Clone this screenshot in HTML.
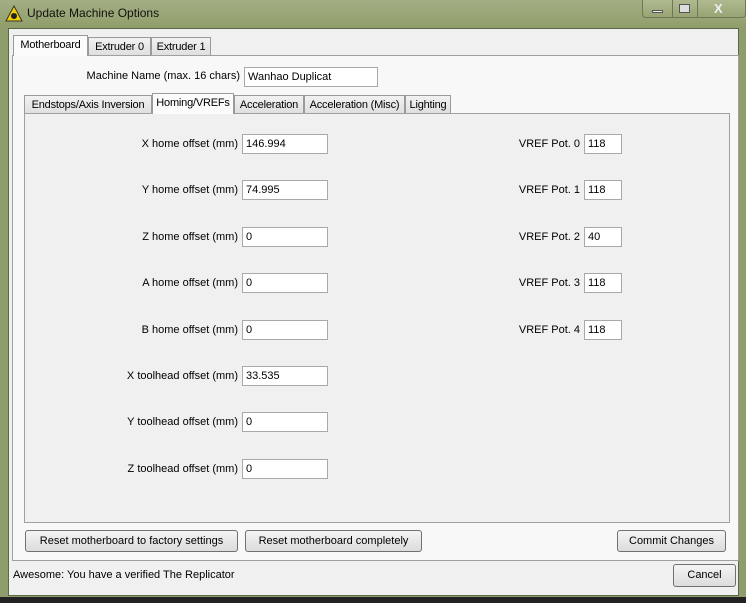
<!DOCTYPE html>
<html><head><style>
*{box-sizing:border-box;margin:0;padding:0}
body{width:746px;height:603px;overflow:hidden;background:#8f9d6c;font-family:"Liberation Sans",sans-serif;font-size:11px;color:#000;position:relative}
.a{position:absolute}
.title{left:0;top:0;width:746px;height:28px;background:linear-gradient(#a3ae84,#909e6a)}
.win{left:8px;top:28px;width:731px;height:568px;background:#f0f0f0;border:1px solid #5c6648}
.tab{position:absolute;height:19px;border:1px solid #9a9a9a;border-bottom:none;background:linear-gradient(#f2f2f2,#dedede);padding:3px 0 0;text-align:center;white-space:nowrap;letter-spacing:-0.2px}
.tab.sel{background:#fbfbfb;height:21px;z-index:2}
.panel{position:absolute;border:1px solid #a0a0a0;background:#f8f8f8}
.inp{position:absolute;height:20px;background:#fff;border:1px solid #a9a9a9;padding:3px 3px 0;white-space:nowrap}
.lbl{position:absolute;text-align:right;white-space:nowrap}
.btn{position:absolute;height:22px;border:1px solid #707070;border-radius:3px;background:linear-gradient(#f4f4f4,#dcdcdc);text-align:center;padding-top:4px;white-space:nowrap}
</style></head><body>
<div class="a title"></div>
<svg class="a" style="left:5px;top:5px" width="18" height="17"><polygon points="9,1 17,16 1,16" fill="#f0d000" stroke="#333" stroke-width="1"/><circle cx="9" cy="11" r="3" fill="#222"/></svg>
<div class="a" style="left:27px;top:6px;font-size:12px;color:#111">Update Machine Options</div>
<div class="a" style="left:642px;top:0;width:104px;height:18px;border:1px solid #6d7856;border-top:none;border-radius:0 0 4px 4px;background:linear-gradient(#b0ba90,#98a474)"></div>
<div class="a" style="left:672px;top:0;width:1px;height:18px;background:#6d7856"></div>
<div class="a" style="left:697px;top:0;width:1px;height:18px;background:#6d7856"></div>
<div class="a" style="left:652px;top:10px;width:11px;height:3px;background:#eee;border:1px solid #555"></div>
<div class="a" style="left:679px;top:4px;width:11px;height:9px;background:#ddd;border:1px solid #555"></div>
<div class="a" style="left:714px;top:1px;font-size:13px;font-weight:bold;color:#eee">X</div>
<div class="a win"></div>
<div class="tab sel" style="left:13px;top:35px;width:75px">Motherboard</div>
<div class="tab" style="left:88px;top:37px;width:63px">Extruder 0</div>
<div class="tab" style="left:151px;top:37px;width:60px">Extruder 1</div>
<div class="panel" style="left:12px;top:55px;width:727px;height:506px"></div>
<div class="lbl" style="left:60px;top:70px;width:180px">Machine Name (max. 16 chars)</div>
<div class="inp" style="left:244px;top:67px;width:134px">Wanhao Duplicat</div>
<div class="tab" style="left:24px;top:95px;width:128px">Endstops/Axis Inversion</div>
<div class="tab sel" style="left:152px;top:93px;width:82px">Homing/VREFs</div>
<div class="tab" style="left:234px;top:95px;width:70px">Acceleration</div>
<div class="tab" style="left:304px;top:95px;width:101px">Acceleration (Misc)</div>
<div class="tab" style="left:405px;top:95px;width:46px">Lighting</div>
<div class="panel" style="left:24px;top:113px;width:706px;height:410px;background:#f0f0f0"></div>

<div class="lbl" style="left:60px;top:138px;width:178px">X home offset (mm)</div><div class="inp" style="left:242px;top:134px;width:86px">146.994</div>
<div class="lbl" style="left:60px;top:184px;width:178px">Y home offset (mm)</div><div class="inp" style="left:242px;top:180px;width:86px">74.995</div>
<div class="lbl" style="left:60px;top:231px;width:178px">Z home offset (mm)</div><div class="inp" style="left:242px;top:227px;width:86px">0</div>
<div class="lbl" style="left:60px;top:277px;width:178px">A home offset (mm)</div><div class="inp" style="left:242px;top:273px;width:86px">0</div>
<div class="lbl" style="left:60px;top:324px;width:178px">B home offset (mm)</div><div class="inp" style="left:242px;top:320px;width:86px">0</div>
<div class="lbl" style="left:60px;top:370px;width:178px">X toolhead offset (mm)</div><div class="inp" style="left:242px;top:366px;width:86px">33.535</div>
<div class="lbl" style="left:60px;top:416px;width:178px">Y toolhead offset (mm)</div><div class="inp" style="left:242px;top:412px;width:86px">0</div>
<div class="lbl" style="left:60px;top:463px;width:178px">Z toolhead offset (mm)</div><div class="inp" style="left:242px;top:459px;width:86px">0</div>

<div class="lbl" style="left:480px;top:138px;width:100px">VREF Pot. 0</div><div class="inp" style="left:584px;top:134px;width:38px">118</div>
<div class="lbl" style="left:480px;top:184px;width:100px">VREF Pot. 1</div><div class="inp" style="left:584px;top:180px;width:38px">118</div>
<div class="lbl" style="left:480px;top:231px;width:100px">VREF Pot. 2</div><div class="inp" style="left:584px;top:227px;width:38px">40</div>
<div class="lbl" style="left:480px;top:277px;width:100px">VREF Pot. 3</div><div class="inp" style="left:584px;top:273px;width:38px">118</div>
<div class="lbl" style="left:480px;top:324px;width:100px">VREF Pot. 4</div><div class="inp" style="left:584px;top:320px;width:38px">118</div>

<div class="btn" style="left:25px;top:530px;width:213px">Reset motherboard to factory settings</div>
<div class="btn" style="left:245px;top:530px;width:177px">Reset motherboard completely</div>
<div class="btn" style="left:617px;top:530px;width:109px">Commit Changes</div>
<div class="a" style="left:13px;top:569px">Awesome: You have a verified The Replicator</div>
<div class="btn" style="left:673px;top:564px;width:63px;height:23px">Cancel</div>
<div class="a" style="left:0;top:597px;width:746px;height:6px;background:#222"></div>
</body></html>
